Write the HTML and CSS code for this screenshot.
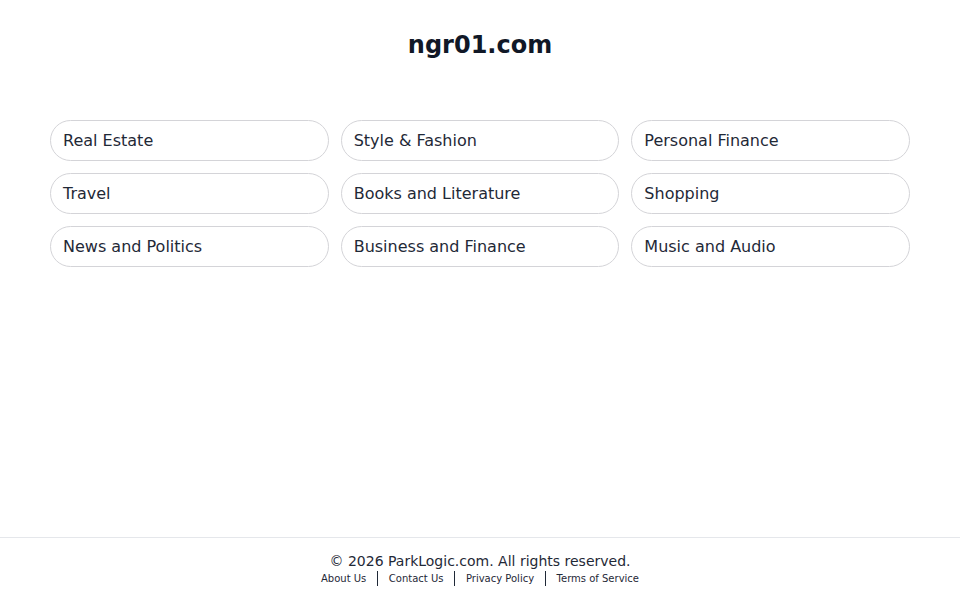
FILE: index.html
```html
<!DOCTYPE html>
<html lang="en">
<head>
<meta charset="utf-8">
<title>ngr01.com</title>
<link rel="stylesheet" href="styles.css">
</head>
<body>
<div class="page">
  <main class="main">
    <h1 class="title">ngr01.com</h1>
    <div class="grid">
      <a class="pill" href="#">Real Estate</a>
      <a class="pill" href="#">Style &amp; Fashion</a>
      <a class="pill" href="#">Personal Finance</a>
      <a class="pill" href="#">Travel</a>
      <a class="pill" href="#">Books and Literature</a>
      <a class="pill" href="#">Shopping</a>
      <a class="pill" href="#">News and Politics</a>
      <a class="pill" href="#">Business and Finance</a>
      <a class="pill" href="#">Music and Audio</a>
    </div>
  </main>
  <footer class="footer">
    <div class="copy">© 2026 ParkLogic.com. All rights reserved.</div>
    <nav class="links">
      <a href="#">About Us</a>
      <span class="sep"></span>
      <a href="#">Contact Us</a>
      <span class="sep"></span>
      <a href="#">Privacy Policy</a>
      <span class="sep"></span>
      <a href="#">Terms of Service</a>
    </nav>
  </footer>
</div>
</body>
</html>
```

FILE: styles.css
```css
* { box-sizing: border-box; }
html, body { margin: 0; padding: 0; }
body {
  font-family: "DejaVu Sans", sans-serif;
  color: #1f2937;
  background: #fff;
}
.page {
  min-height: 600px;
  display: flex;
  flex-direction: column;
}
.main {
  flex: 1;
  padding: 0 50px;
}
.title {
  margin: 0;
  padding-top: 30px;
  font-size: 24px;
  line-height: 30px;
  font-weight: bold;
  text-align: center;
  color: #111827;
}
.grid {
  margin-top: 60px;
  display: grid;
  grid-template-columns: repeat(3, 1fr);
  gap: 12px 12px;
}
.pill {
  display: flex;
  align-items: center;
  height: 41px;
  padding: 0 12px;
  border: 1px solid #d4d4d8;
  border-radius: 21px;
  font-size: 16px;
  color: #1f2937;
  text-decoration: none;
}
.footer {
  border-top: 1px solid #e5e7eb;
  height: 63px;
  padding-top: 14px;
  text-align: center;
}
.copy {
  font-size: 14px;
  line-height: 18px;
  color: #1f2937;
}
.links {
  display: flex;
  justify-content: center;
  align-items: center;
  gap: 10.5px;
  margin-top: 1px;
}
.links a {
  font-size: 10px;
  line-height: 14px;
  color: #1f2937;
  text-decoration: none;
}
.sep {
  width: 1.5px;
  height: 15px;
  background: #1f2937;
}
```
